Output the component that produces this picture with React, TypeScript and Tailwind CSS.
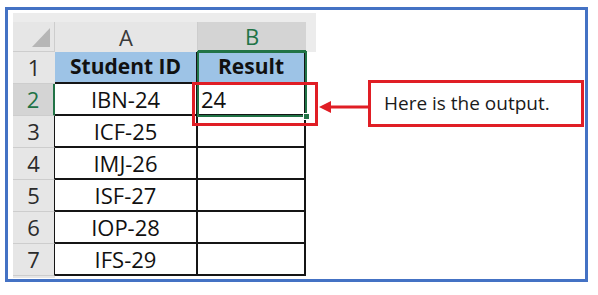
const ids = ["IBN-24", "ICF-25", "IMJ-26", "ISF-27", "IOP-28", "IFS-29"];

function Sheet() {
  return (
    <div className="relative w-[303px] grid grid-cols-[42px_143px_108px_10px] grid-rows-[9px_30px_repeat(7,32px)_2px] text-[#111]">
      {/* top strip */}
      <div className="col-span-4 bg-[#ececec]" />

      {/* column headers */}
      <div className="bg-[#e6e6e6] border-r border-b border-[#cdcdcd] flex items-end justify-end pr-[4px] pb-[4px]">
        <svg width="18" height="19" viewBox="0 0 18 19">
          <polygon points="18,0 18,19 0,19" fill="#b6b6b6" />
        </svg>
      </div>
      <div className="bg-[#e6e6e6] border-r border-[#cdcdcd] flex items-center justify-center text-[22px] text-[#3a3a3a]">
        A
      </div>
      <div className="bg-[#d4d4d4] border-b-2 border-[#217346] flex items-center justify-center text-[22px] text-[#217346]">
        B
      </div>
      <div className="bg-[#ececec]" />

      {/* row 1 */}
      <div className="bg-[#e6e6e6] border-b border-[#cdcdcd] flex items-center justify-center text-[22px] text-[#2b2b2b]">
        1
      </div>
      <div className="bg-[#9dc3e6] border-r-2 border-b-2 border-[#151515] flex items-center justify-center text-[21px] font-bold">
        Student ID
      </div>
      <div className="bg-[#9dc3e6] border-r-2 border-b-2 border-[#151515] flex items-center justify-center text-[21px] font-bold">
        Result
      </div>
      <div className="bg-white" />

      {/* data rows */}
      {ids.map((id, i) => {
        const selected = i === 0;
        return (
          <div key={id} className="contents">
            <div
              className={
                selected
                  ? "bg-[#d4d4d4] border-b border-r-2 border-b-[#cdcdcd] border-r-[#217346] flex items-center justify-center text-[22px] text-[#217346]"
                  : "bg-[#e6e6e6] border-b border-r border-b-[#cdcdcd] border-r-[#151515] flex items-center justify-center text-[22px] text-[#2b2b2b]"
              }
            >
              {i + 2}
            </div>
            <div className="bg-white border-r-2 border-b-2 border-[#151515] flex items-center justify-center text-[22px]">
              {id}
            </div>
            <div className="bg-white border-r-2 border-b-2 border-[#151515] flex items-center pl-[3px] text-[22px]">
              {selected ? "24" : ""}
            </div>
            <div className="bg-white" />
          </div>
        );
      })}

      {/* bottom edge */}
      <div className="bg-[#e6e6e6]" />
      <div className="col-span-3 bg-white" />

      {/* selection B1:B2 */}
      <div className="absolute left-[184px] top-[38px] w-[110px] h-[66px] border-2 border-[#217346]" />
      <div className="absolute left-[290px] top-[100px] w-[7px] h-[7px] bg-[#217346] border border-white" />

      {/* red highlight */}
      <div className="absolute left-[179px] top-[69px] w-[126px] h-[44px] border-[3px] border-[#e01e25]" />
    </div>
  );
}

export default function App() {
  return (
    <div className="w-[598px] h-[295px] bg-white pt-[7px] pl-[5px] font-['Open_Sans',sans-serif]">
      <div className="w-[583px] h-[275px] border-[3px] border-[#4472c4] pl-[5px] pt-[3px] flex items-start">
        <Sheet />
        <svg width="52" height="14" viewBox="0 0 52 14" className="mt-[87px] shrink-0">
          <line x1="12" y1="7" x2="52" y2="7" stroke="#e01e25" strokeWidth="3" />
          <polygon points="3,7 15,1 15,13" fill="#e01e25" />
        </svg>
        <div className="mt-[67px] w-[216px] h-[47px] border-[3px] border-[#e01e25] flex items-center pl-[13px] text-[19px] text-[#1a1a1a]">
          Here is the output.
        </div>
      </div>
    </div>
  );
}
